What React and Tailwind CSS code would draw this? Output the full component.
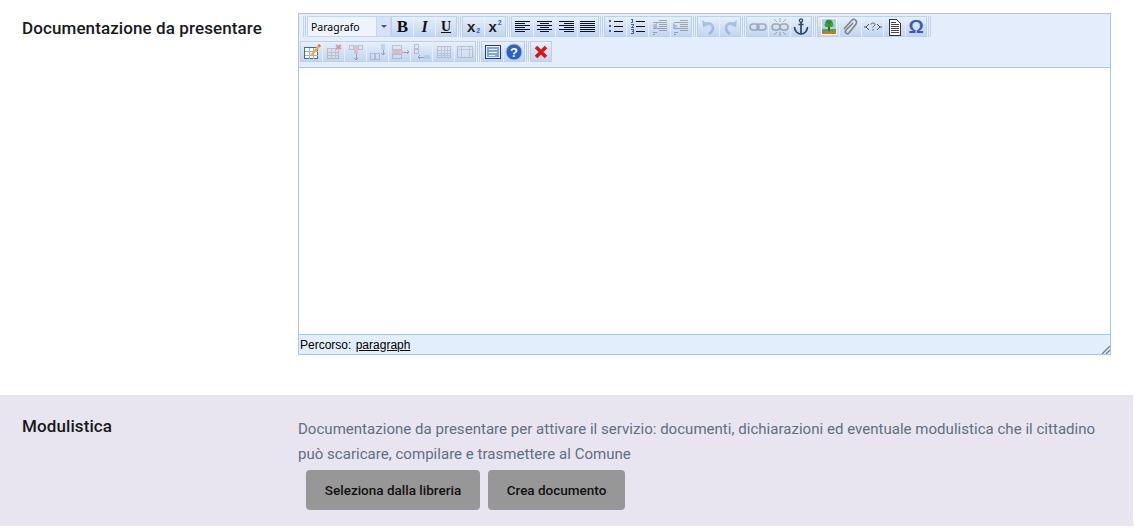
const Svg = ({ children, off }) => (
  <svg width="20" height="20" viewBox="0 0 20 20" className={off ? "opacity-30" : ""} shapeRendering="crispEdges">
    {children}
  </svg>
);

const Lines = ({ rows, color = "#111" }) => (
  <>
    {rows.map(([x, y, w], i) => (
      <rect key={i} x={x} y={y} width={w} height="1" fill={color} />
    ))}
  </>
);

const align = {
  left: [[2,4,15],[2,6,10],[2,8,15],[2,10,10],[2,12,15],[2,14,10]],
  center: [[2,4,15],[5,6,9],[2,8,15],[5,10,9],[2,12,15],[5,14,9]],
  right: [[2,4,15],[7,6,10],[2,8,15],[7,10,10],[2,12,15],[7,14,10]],
  full: [[2,4,15],[2,6,15],[2,8,15],[2,10,15],[2,12,15],[2,14,15]],
};

const TextIcon = ({ t, cls }) => <span className={`text-[#111] leading-none ${cls}`}>{t}</span>;

const icons = {
  bold: <TextIcon t="B" cls="font-['Liberation_Serif',serif] font-bold text-[17px]" />,
  italic: <TextIcon t="I" cls="font-['Liberation_Serif',serif] font-bold italic text-[16px]" />,
  under: <TextIcon t="U" cls="font-['Liberation_Serif',serif] font-bold underline text-[14px]" />,
  sub: (
    <span className="flex items-end leading-none font-['Liberation_Sans',sans-serif] font-bold text-[#222] text-[15px]">
      x<span className="text-[7px] text-[#3a5fb0] ml-px">2</span>
    </span>
  ),
  sup: (
    <span className="flex items-start leading-none font-['Liberation_Sans',sans-serif] font-bold text-[#222] text-[15px]">
      x<span className="text-[7px] text-[#3a5fb0] ml-px">2</span>
    </span>
  ),
  left: <Svg><Lines rows={align.left} /></Svg>,
  center: <Svg><Lines rows={align.center} /></Svg>,
  right: <Svg><Lines rows={align.right} /></Svg>,
  full: <Svg><Lines rows={align.full} /></Svg>,
  bullets: (
    <Svg>
      <Lines rows={[[8,4,9],[8,9,9],[8,14,9]]} />
      <rect x="3" y="3" width="2" height="2" fill="#3a5fb0" />
      <rect x="3" y="8" width="2" height="2" fill="#3a5fb0" />
      <rect x="3" y="13" width="2" height="2" fill="#3a5fb0" />
    </Svg>
  ),
  numbers: (
    <Svg>
      <Lines rows={[[8,4,9],[8,9,9],[8,14,9]]} />
      <Lines color="#3a5fb0" rows={[[3,2,2],[4,3,1],[4,4,1],[3,5,2],[3,7,3],[5,8,1],[4,9,1],[3,10,3],[3,12,3],[5,13,1],[4,14,2],[5,15,1],[3,16,3]]} />
    </Svg>
  ),
  outdent: (
    <Svg off>
      <Lines rows={[[9,3,8],[3,5,14],[9,7,8],[9,9,8],[3,11,14],[9,13,8],[3,15,4],[3,17,2]]} />
      <path d="M2 9l5-3v6z" fill="#3a5fb0" />
    </Svg>
  ),
  indent: (
    <Svg off>
      <Lines rows={[[9,3,8],[3,5,14],[9,7,8],[9,9,8],[3,11,14],[9,13,8],[3,15,4],[3,17,2]]} />
      <path d="M7 9L2 6v6z" fill="#3a5fb0" />
    </Svg>
  ),
  undo: (
    <svg width="20" height="20" viewBox="0 0 20 20" className="opacity-25">
      <path d="M3 3l1 7 6-2z" fill="#1c4fb0" />
      <path d="M6 7c5-2 8 1 8 4 0 2-1 4-4 6" fill="none" stroke="#1c4fb0" strokeWidth="2.6" />
    </svg>
  ),
  redo: (
    <svg width="20" height="20" viewBox="0 0 20 20" className="opacity-25">
      <g transform="matrix(-1 0 0 1 20 0)">
        <path d="M3 3l1 7 6-2z" fill="#1c4fb0" />
        <path d="M6 7c5-2 8 1 8 4 0 2-1 4-4 6" fill="none" stroke="#1c4fb0" strokeWidth="2.6" />
      </g>
    </svg>
  ),
  link: (
    <svg width="20" height="20" viewBox="0 0 20 20" className="opacity-30">
      <rect x="2" y="7" width="9" height="6" rx="3" fill="none" stroke="#222" strokeWidth="1.5" />
      <rect x="9" y="7" width="9" height="6" rx="3" fill="none" stroke="#222" strokeWidth="1.5" />
    </svg>
  ),
  unlink: (
    <svg width="20" height="20" viewBox="0 0 20 20" className="opacity-30">
      <rect x="2" y="7" width="8" height="6" rx="3" fill="none" stroke="#222" strokeWidth="1.5" />
      <rect x="10" y="7" width="8" height="6" rx="3" fill="none" stroke="#222" strokeWidth="1.5" />
      <path d="M10 1v4M10 15v4M4 2l3 3M16 2l-3 3M4 18l3-3M16 18l-3-3" stroke="#222" />
    </svg>
  ),
  anchor: (
    <svg width="20" height="20" viewBox="0 0 20 20">
      <circle cx="10" cy="3.5" r="1.6" fill="none" stroke="#2c4468" strokeWidth="1.3" />
      <path d="M10 5v12M7.5 7.5h5" stroke="#2c4468" strokeWidth="1.7" />
      <path d="M3.5 10c0 4 3 7 6.5 7s6.5-3 6.5-7" fill="none" stroke="#2c4468" strokeWidth="1.7" />
    </svg>
  ),
  image: (
    <svg width="20" height="20" viewBox="0 0 20 20">
      <rect x="2" y="1" width="16" height="17" fill="#fff" />
      <rect x="3" y="2" width="14" height="10" fill="#a8d4ee" />
      <rect x="3" y="12" width="14" height="3" fill="#4fae2f" />
      <rect x="3" y="15" width="14" height="2" fill="#d9702a" />
      <rect x="9" y="9" width="2" height="5" fill="#7a4a1c" />
      <circle cx="10" cy="6.5" r="3.8" fill="#2f8f25" />
      <circle cx="7.5" cy="8" r="2" fill="#3aa52c" />
      <circle cx="12.5" cy="8" r="2" fill="#3aa52c" />
    </svg>
  ),
  clip: (
    <svg width="20" height="20" viewBox="0 0 20 20">
      <path d="M3 12L11 3c2-2 6 1 4 4L8 16c-2 2-5-1-3-3l7-7" fill="none" stroke="#808080" strokeWidth="1.5" />
    </svg>
  ),
  code: (
    <svg width="20" height="20" viewBox="0 0 20 20">
      <path d="M1 10h2M6 7l-3 3 3 3M14 7l3 3-3 3M17 10h2" fill="none" stroke="#555" />
      <path d="M8 7.5c0-2 4-2 4 0 0 1.5-2 1.5-2 3M10 12v1.5" fill="none" stroke="#555" />
    </svg>
  ),
  doc: (
    <svg width="20" height="20" viewBox="0 0 20 20" shapeRendering="crispEdges">
      <path d="M4.5 2.5h7l4 4v12h-11z" fill="#fff" stroke="#333" />
      <Lines rows={[[6,5,5],[6,7,8],[6,9,8],[6,11,8],[6,13,8],[6,15,8]]} color="#444" />
    </svg>
  ),
  omega: <span className="font-['Liberation_Sans',sans-serif] font-bold text-[19px] leading-none text-[#3a5cb8]">Ω</span>,
  tableNew: (
    <svg width="20" height="20" viewBox="0 0 20 20" shapeRendering="crispEdges">
      <rect x="2.5" y="5.5" width="13" height="11" fill="#fff" stroke="#4a6a92" />
      <path d="M2.5 9.5h13M2.5 13h13M7 5.5v11M11 5.5v11" stroke="#9db4cf" />
      <path d="M9 12l7-9 2 2-7 8-3 1z" fill="#e8b040" shapeRendering="auto" />
      <path d="M16 3l1-1 2 2-1 1z" fill="#d85050" shapeRendering="auto" />
    </svg>
  ),
  tableDel: (
    <svg width="20" height="20" viewBox="0 0 20 20" className="opacity-40" shapeRendering="crispEdges">
      <rect x="3.5" y="6.5" width="11" height="10" fill="#ddd" stroke="#889" />
      <path d="M3.5 10h11M3.5 13h11M7 6.5v10M11 6.5v10" stroke="#99a" />
      <path d="M12 3l5 4M17 3l-5 4" stroke="#d02020" strokeWidth="2" shapeRendering="auto" />
    </svg>
  ),
  colBefore: (
    <svg width="20" height="20" viewBox="0 0 20 20" className="opacity-40" shapeRendering="crispEdges">
      <path d="M3.5 3.5h4v4h-4zM12.5 3.5h4v4h-4z" fill="none" stroke="#889" />
      <rect x="8" y="3" width="4" height="9" fill="#e08a90" />
      <path d="M10 12v6M8 16l2 2 2-2" stroke="#445" fill="none" />
    </svg>
  ),
  colAfter: (
    <svg width="20" height="20" viewBox="0 0 20 20" className="opacity-40" shapeRendering="crispEdges">
      <path d="M2.5 11.5h4v6h-4zM7.5 11.5h4v6h-4z" fill="none" stroke="#889" />
      <rect x="13" y="2" width="4" height="6" fill="#9db4dc" />
      <path d="M15 8v5M13 11l2 2 2-2" stroke="#445" fill="none" />
    </svg>
  ),
  rowBefore: (
    <svg width="20" height="20" viewBox="0 0 20 20" className="opacity-40" shapeRendering="crispEdges">
      <path d="M2.5 3.5h9v4h-9zM2.5 12.5h9v4h-9z" fill="none" stroke="#889" />
      <rect x="2" y="8" width="11" height="4" fill="#e08a90" />
      <path d="M13 10h6M17 8l2 2-2 2" stroke="#445" fill="none" />
    </svg>
  ),
  rowAfter: (
    <svg width="20" height="20" viewBox="0 0 20 20" className="opacity-40" shapeRendering="crispEdges">
      <path d="M2.5 2.5h4v4h-4zM2.5 7.5h4v4h-4z" fill="none" stroke="#889" />
      <rect x="12" y="13" width="6" height="4" fill="#9db4dc" />
      <path d="M6 15h6M8 13l-2 2 2 2" stroke="#445" fill="none" />
    </svg>
  ),
  merge: (
    <svg width="20" height="20" viewBox="0 0 20 20" className="opacity-40" shapeRendering="crispEdges">
      <rect x="3.5" y="4.5" width="13" height="11" fill="#dde6f4" stroke="#889" />
      <path d="M3.5 8h13M3.5 11h13M3.5 13h13M7 4.5v11M10 4.5v11M13 4.5v11" stroke="#99a" />
    </svg>
  ),
  split: (
    <svg width="20" height="20" viewBox="0 0 20 20" className="opacity-40" shapeRendering="crispEdges">
      <rect x="2.5" y="4.5" width="15" height="11" fill="#dde6f4" stroke="#889" />
      <path d="M2.5 7.5h15M6.5 4.5v11M14.5 4.5v11" stroke="#99a" />
    </svg>
  ),
  full2: (
    <svg width="20" height="20" viewBox="0 0 20 20" shapeRendering="crispEdges">
      <rect x="2.5" y="3.5" width="15" height="13" fill="#e8f0fc" stroke="#24407c" />
      <rect x="4" y="5" width="12" height="10" fill="#7fa6de" />
      <path d="M6 7.5h8M6 10.5h8M6 13h6" stroke="#fff" />
    </svg>
  ),
  help: (
    <svg width="20" height="20" viewBox="0 0 20 20">
      <circle cx="10" cy="10" r="8" fill="#2b62c8" stroke="#a8c0e8" />
      <text x="10" y="14.5" textAnchor="middle" fontSize="13" fontWeight="700" fill="#fff" fontFamily="Liberation Sans">?</text>
    </svg>
  ),
  close: (
    <svg width="20" height="20" viewBox="0 0 20 20">
      <path d="M5 5l10 10M15 5L5 15" stroke="#d81818" strokeWidth="3.6" />
    </svg>
  ),
};

const Group = ({ items }) => (
  <div className="flex h-[21px]">
    {items.map((k, i) => (
      <div
        key={k + i}
        className={`flex h-full w-[22px] items-center justify-center border-y border-[#bdd0ea] bg-[linear-gradient(#e6effc,#d0dff4_60%,#c3d6f0)] first:border-l first:border-l-[#bdd0ea] last:border-r last:border-r-[#bdd0ea] ${
          i > 0 ? "border-l border-l-[#e6eefa]" : ""
        }`}
      >
        {icons[k]}
      </div>
    ))}
  </div>
);

const Sep = () => <div className="mx-[1px] h-[21px] w-[3px] border-x border-[#c2d2e8] bg-[#e4edfc]" />;

const Title = ({ children, cls }) => (
  <h2 className={`w-[276px] font-['Roboto',sans-serif] text-[17px] font-medium leading-[24px] tracking-[0.1px] text-[#17191c] ${cls}`}>
    {children}
  </h2>
);

const btn = "h-[40px] rounded-[4px] bg-[#979797] font-['Roboto',sans-serif] text-[13.5px] font-medium text-[#111]";

export default function App() {
  return (
    <div className="h-[532px] w-[1134px] overflow-hidden bg-white font-['Roboto',sans-serif]">
      <div className="flex pl-[22px] pt-[13px]">
        <Title cls="pt-[3px]">Documentazione da presentare</Title>
        <div className="flex h-[342px] w-[813px] flex-col border border-[#a9c6e4] bg-white">
          <div className="flex h-[54px] flex-col gap-[4px] border-b border-[#a9c6e4] bg-[#e4edfc] pt-[2px]">
            <div className="flex items-center pl-[3px]">
              <Sep />
              <div className="flex h-[21px] w-[84px]">
                <div className="flex w-[70px] items-center border border-[#c6d6ec] bg-[#eef4fe] pl-[3px] pt-[3px] font-['Noto_Sans',sans-serif] text-[10.5px] text-black">
                  Paragrafo
                </div>
                <div className="flex w-[14px] items-center justify-center border-y border-r border-[#c6d6ec] bg-[#d6e3f6]">
                  <span className="h-0 w-0 border-x-[3px] border-t-[3px] border-x-transparent border-t-[#3a5c96]" />
                </div>
              </div>
              <Group items={["bold", "italic", "under"]} />
              <Sep />
              <Group items={["sub", "sup"]} />
              <Sep />
              <Group items={["left", "center", "right", "full"]} />
              <Sep />
              <Group items={["bullets", "numbers", "outdent", "indent"]} />
              <Sep />
              <Group items={["undo", "redo"]} />
              <Sep />
              <Group items={["link", "unlink", "anchor"]} />
              <Sep />
              <Group items={["image", "clip", "code", "doc", "omega"]} />
              <Sep />
            </div>
            <div className="flex items-center pl-[1px]">
              <Group items={["tableNew", "tableDel", "colBefore", "colAfter", "rowBefore", "rowAfter", "merge", "split"]} />
              <Sep />
              <Group items={["full2", "help"]} />
              <Sep />
              <Group items={["close"]} />
            </div>
          </div>
          <div className="flex-1 bg-white" />
          <div className="relative flex h-[20px] items-center border-t border-[#a9c6e4] bg-[#e4edfc] pl-[1px] font-['Liberation_Sans',sans-serif] text-[12px] text-black">
            Percorso:&nbsp;<span className="ml-[1px] underline">paragraph</span>
            <svg className="absolute bottom-0 right-0" width="9" height="9" viewBox="0 0 9 9">
              <path d="M1 9l8-8M5 9l4-4" stroke="#808080" strokeWidth="1.4" />
            </svg>
          </div>
        </div>
      </div>
      <section className="mt-[40px] flex h-[131px] w-[1133px] bg-[#e8e5f0] pl-[22px] pt-[19px]">
        <Title>Modulistica</Title>
        <div className="flex-1">
          <p className="pt-[3px] text-[15px] leading-[25px] tracking-[0.03px] text-[#5d7083]">
            Documentazione da presentare per attivare il servizio: documenti, dichiarazioni ed eventuale modulistica che il cittadino
            <br />
            può scaricare, compilare e trasmettere al Comune
          </p>
          <div className="ml-[8px] mt-[3px] flex gap-[8px]">
            <button className={`${btn} w-[174px]`}>Seleziona dalla libreria</button>
            <button className={`${btn} w-[137px]`}>Crea documento</button>
          </div>
        </div>
      </section>
    </div>
  );
}
